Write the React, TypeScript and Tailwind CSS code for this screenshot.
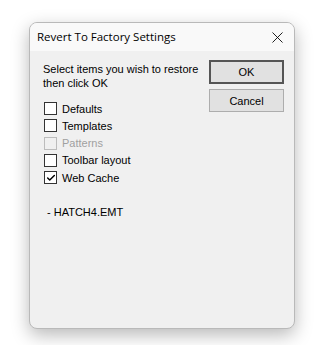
import { Check, X } from "lucide-react";

const items = [
  { label: "Defaults", checked: false, disabled: false },
  { label: "Templates", checked: false, disabled: false },
  { label: "Patterns", checked: false, disabled: true },
  { label: "Toolbar layout", checked: false, disabled: false },
  { label: "Web Cache", checked: true, disabled: false },
];

function CheckRow({ label, checked, disabled }: { label: string; checked: boolean; disabled: boolean }) {
  return (
    <div className="flex items-center h-[17.25px] gap-[5px]">
      <span
        className={
          "w-[13px] h-[13px] border flex items-center justify-center " +
          (disabled ? "border-[#bcbcbc] bg-[#f0f0f0]" : "border-[#333] bg-white")
        }
      >
        {checked && <Check size={10} strokeWidth={3.5} className="text-black" />}
      </span>
      <span className={disabled ? "text-[#a0a0a0]" : "text-[#000]"}>{label}</span>
    </div>
  );
}

export default function App() {
  return (
    <div className="w-[332px] h-[345px] bg-white pt-[22px] pl-[29px]">
      <div
        className="w-[266px] h-[307px] rounded-[8px] overflow-hidden border border-[#b9b9b9] bg-[#f0f0f0] shadow-[0_6px_18px_rgba(0,0,0,0.28)] flex flex-col"
        style={{ fontFamily: '"Liberation Sans", Arial, sans-serif' }}
      >
        {/* Title bar */}
        <div className="h-[28px] bg-[#f9f9f9] flex items-center justify-between pl-[7px] pr-[7px]">
          <span className="text-[11.5px] text-black" style={{ fontFamily: '"Open Sans", "Noto Sans", sans-serif' }}>
            Revert To Factory Settings
          </span>
          <X size={19} strokeWidth={1.1} className="text-black" />
        </div>

        {/* Body */}
        <div className="flex-1 flex pt-[9px] pl-[13px] pr-[10px] text-[11px] leading-[14px]">
          <div className="flex-1">
            <p className="mt-[2px]">Select items you wish to restore<br />then click OK</p>
            <div className="mt-[10px] ml-[1px] flex flex-col">
              {items.map((it) => (
                <CheckRow key={it.label} {...it} />
              ))}
            </div>
            <p className="mt-[19px] ml-[4px]">- HATCH4.EMT</p>
          </div>
          <div className="flex flex-col gap-[5px] w-[75px]">
            <button className="h-[24px] bg-[#e1e1e1] border-2 border-[#555] text-black">OK</button>
            <button className="h-[23px] bg-[#e1e1e1] border border-[#adadad] text-black">Cancel</button>
          </div>
        </div>
      </div>
    </div>
  );
}
